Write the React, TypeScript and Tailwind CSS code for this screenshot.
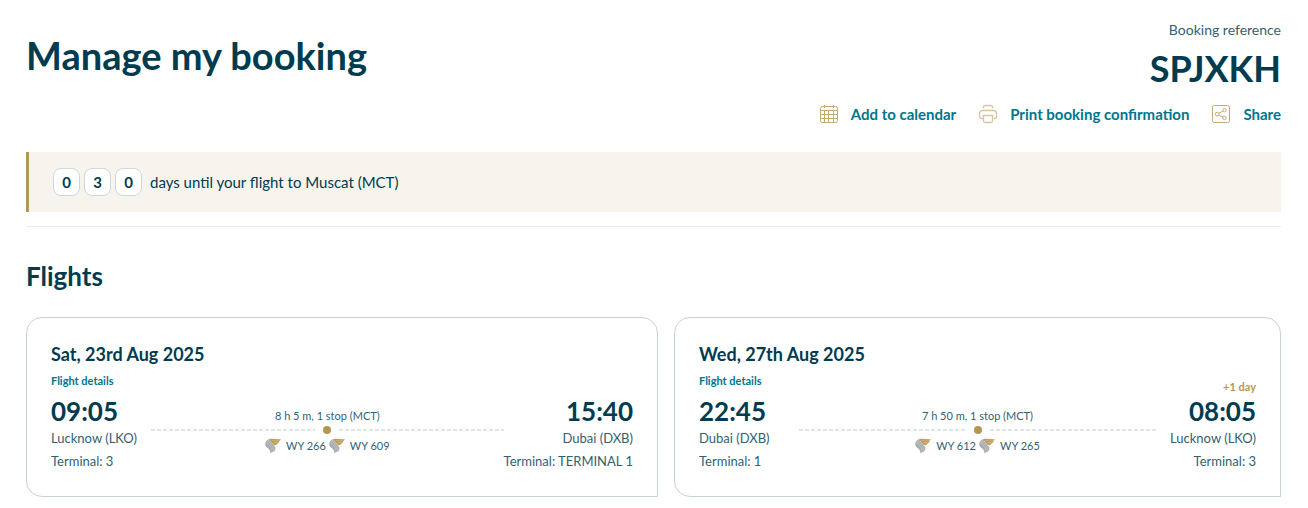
import type { ReactNode } from 'react';

type Stop = {
  time: string;
  city: string;
  terminal: string;
  note?: string;
};

type Flight = {
  date: string;
  from: Stop;
  to: Stop;
  duration: string;
  numbers: string[];
};

const flights: Flight[] = [
  {
    date: 'Sat, 23rd Aug 2025',
    from: { time: '09:05', city: 'Lucknow (LKO)', terminal: 'Terminal: 3' },
    to: { time: '15:40', city: 'Dubai (DXB)', terminal: 'Terminal: TERMINAL 1' },
    duration: '8 h 5 m, 1 stop (MCT)',
    numbers: ['WY 266', 'WY 609'],
  },
  {
    date: 'Wed, 27th Aug 2025',
    from: { time: '22:45', city: 'Dubai (DXB)', terminal: 'Terminal: 1' },
    to: { time: '08:05', city: 'Lucknow (LKO)', terminal: 'Terminal: 3', note: '+1 day' },
    duration: '7 h 50 m, 1 stop (MCT)',
    numbers: ['WY 612', 'WY 265'],
  },
];

const CalendarIcon = () => (
  <svg className="h-5 w-5 shrink-0" viewBox="0 0 20 20" fill="none" stroke="#c4ab72" aria-hidden="true">
    <rect x="1.5" y="2.5" width="17" height="16" rx="2" />
    <path d="M1.5 6.5h17M1.5 10.5h17M1.5 14.5h17M5.5 6.5v12M9.5 6.5v12M14.5 6.5v12M5.5 1v3M14.5 1v3" />
  </svg>
);

const PrinterIcon = () => (
  <svg className="h-5 w-5 shrink-0" viewBox="0 0 20 20" fill="none" stroke="#d6c6a0" strokeWidth="1.3" aria-hidden="true">
    <path d="M5.5 4.5V3A1.5 1.5 0 0 1 7 1.5h6A1.5 1.5 0 0 1 14.5 3v1.5" />
    <path d="M5.5 14.5h-2a2 2 0 0 1-2-2v-3a3 3 0 0 1 3-3h11a3 3 0 0 1 3 3v3a2 2 0 0 1-2 2h-1" />
    <path d="M4.5 11.5h11M5.5 11.5V17A1.5 1.5 0 0 0 7 18.5h6a1.5 1.5 0 0 0 1.5-1.5v-5.5" />
  </svg>
);

const ShareIcon = () => (
  <svg className="h-5 w-5 shrink-0" viewBox="0 0 20 20" fill="none" stroke="#c4ab72" aria-hidden="true">
    <rect x="1.5" y="1.5" width="17" height="17" rx="2" />
    <circle cx="6.2" cy="10.2" r="1.9" />
    <circle cx="13.5" cy="6.2" r="1.7" />
    <circle cx="13.5" cy="14" r="1.7" />
    <path d="M8 9.3l4-2.3M8 11.1l4 2.1" />
  </svg>
);

const AirlineLogo = () => (
  <svg className="h-4 w-4 shrink-0" viewBox="0 0 16 16" aria-hidden="true">
    <path d="M4.500.8C2 1.800.3 3.600.2 6c0 2.800 2 3.600 3.600 5 1.300 1.200 1.300 2.400 1.600 4 2-.3 4.500-1.800 5-3.800.3-1.800-.8-3-2-4.200C6.800 5.300 5.200 4 4.500.8z" fill="#a9abb0" />
    <path d="M1.800 3c.2 4 5.200 5 5.500 11M3.200 1.800c.4 4 5 5.200 5.800 10.700" fill="none" stroke="#d0d2d6" strokeWidth=".6" />
    <path d="M4.500.9c3.500-.7 7.500.9 11.500.2-1.200 1.400-1.600 2.200-2 3-.4 1.100-1.100 1.700-2.100 1.900-.5 1.100-1.300 1.500-2.500 1.300C7.200 5.500 5.300 3.500 4.500.9z" fill="#bf9f58" />
    <path d="M7 2.200c2.500.6 4.800.8 7.500.5M8.500 4.200c1.500.5 3 .6 4.500.4" fill="none" stroke="#d8c490" strokeWidth=".5" />
  </svg>
);

const Action = ({ icon, label }: { icon: ReactNode; label: string }) => (
  <button type="button" className="flex cursor-pointer items-center gap-3 text-[15px] leading-5 font-bold text-[#00758d]">
    {icon}
    {label}
  </button>
);

const Endpoint = ({ stop, end = false }: { stop: Stop; end?: boolean }) => (
  <div className={end ? 'min-w-[100px] shrink-0 text-right' : 'min-w-[100px] shrink-0'}>
    <p className="text-[26px] leading-8 font-bold">{stop.time}</p>
    <p className="text-[13px] leading-[23px] text-[#335f72]">{stop.city}</p>
    <p className="text-[13px] leading-[23px] text-[#335f72]">{stop.terminal}</p>
  </div>
);

const Dashes = () => (
  <span className="h-[2px] flex-1 bg-[repeating-linear-gradient(90deg,#dfe6e8_0_4px,transparent_4px_6px)]" />
);

const FlightCard = ({ flight }: { flight: Flight }) => (
  <article className="rounded-2xl rounded-br-none border border-[#c5d3d8] px-6 pt-6 pb-[23px]">
    <h3 className="text-lg leading-6 font-bold">{flight.date}</h3>
    <div className="flex min-h-[29px] items-start justify-between pt-[5px]">
      <a href="#details" className="text-[11px] leading-5 font-bold text-[#00758d]">
        Flight details
      </a>
      {flight.to.note && <span className="pt-2 text-[11px] leading-4 font-bold text-[#b39755]">{flight.to.note}</span>}
    </div>
    <div className="flex">
      <Endpoint stop={flight.from} />
      <div className="flex min-w-0 flex-1 flex-col pt-[13px] text-[11px] leading-4 text-[#335f72]">
        <p className="text-center">{flight.duration}</p>
        <div className="flex h-3 items-center gap-2">
          <Dashes />
          <span className="h-2 w-2 rounded-full bg-[#b39755]" />
          <Dashes />
        </div>
        <div className="flex justify-center gap-[3px] pt-0.5">
          {flight.numbers.map((number) => (
            <span key={number} className="flex items-center gap-[5px]">
              <AirlineLogo />
              {number}
            </span>
          ))}
        </div>
      </div>
      <Endpoint stop={flight.to} end />
    </div>
  </article>
);

const App = () => {
  return (
    <main className="pt-5 pr-[27px] pb-3 pl-[26px] font-[Lato,sans-serif] text-[#003b50]">
      <header className="flex items-start justify-between">
        <h1 className="pt-[11px] text-[38px] leading-[48px] font-bold">Manage my booking</h1>
        <div className="flex flex-col items-end">
          <p className="text-sm leading-5 text-[#335f72]">Booking reference</p>
          <p className="pt-1 text-4xl leading-[48px] font-bold">SPJXKH</p>
          <div className="flex gap-[22px] pt-3">
            <Action icon={<CalendarIcon />} label="Add to calendar" />
            <Action icon={<PrinterIcon />} label="Print booking confirmation" />
            <Action icon={<ShareIcon />} label="Share" />
          </div>
        </div>
      </header>

      <div className="mt-7 flex h-15 items-center border-l-3 border-[#b39755] bg-[#f7f4ed] px-6">
        <div className="flex gap-1">
          {['0', '3', '0'].map((digit, index) => (
            <span key={index} className="flex h-7 w-[27px] items-center justify-center rounded-lg border border-[#ccd8dc] bg-white text-[15px] font-bold">
              {digit}
            </span>
          ))}
        </div>
        <p className="pl-2 text-[15px] leading-5">days until your flight to Muscat (MCT)</p>
      </div>

      <hr className="mt-3.5 border-[#ebeeef]" />

      <section>
        <h2 className="pt-[31px] text-[26px] leading-9 font-bold">Flights</h2>
        <div className="grid grid-cols-[632fr_607fr] gap-4 pt-[23px]">
          {flights.map((flight) => (
            <FlightCard key={flight.date} flight={flight} />
          ))}
        </div>
      </section>
    </main>
  );
};

export default App;
